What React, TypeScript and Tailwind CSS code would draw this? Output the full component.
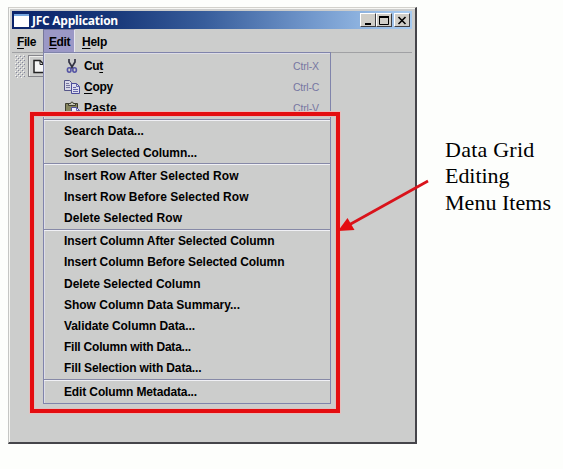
import React from "react";

type Entry = { label: string; width: number; mnemonic?: number; shortcut?: string; icon?: React.ReactNode };

function ScissorsIcon() {
  return (
    <svg width="16" height="16" viewBox="0 0 16 16" fill="none">
      <path d="M5 1v3l4 6.500M11 1v3L7 10.500" stroke="#333344" strokeWidth="1.700" />
      <ellipse cx="5.200" cy="12" rx="1.800" ry="2.200" stroke="#5555a5" strokeWidth="1.600" />
      <ellipse cx="10.600" cy="12" rx="1.800" ry="2.200" stroke="#5555a5" strokeWidth="1.600" />
    </svg>
  );
}

function CopyIcon() {
  return (
    <svg width="17" height="16" viewBox="0 0 17 16" fill="none">
      <path d="M.5 1.500h5l2 2v8h-7z" fill="#d9d9e8" stroke="#555588" />
      <path d="M2 4.500h3M2 6.500h4M2 8.500h4" stroke="#77779f" />
      <path d="M7.500 4.500h5l3 3v7h-8z" fill="#dedeee" stroke="#4c4c9b" />
      <path d="M12.500 4.500v3h3M9 8.500h3M9 10.500h5M9 12.500h5" stroke="#6666ac" />
    </svg>
  );
}

function PasteIcon() {
  return (
    <svg width="17" height="16" viewBox="0 0 17 16" fill="none">
      <path d="M1.500 2.500h12v12h-12z" fill="#85855d" stroke="#3d3d2f" />
      <path d="M4.500 4.500v-2h2l1-1.500h1l1 1.500h2v2z" fill="#c5c5b5" stroke="#3d3d2f" />
      <path d="M7.500 6.500h5l3 3v6h-8z" fill="#eeeeff" stroke="#5050a0" />
      <path d="M12.500 6.500v3h3M9 10.500h3M9 12.500h5" stroke="#6666ac" />
    </svg>
  );
}

const groups: Entry[][] = [
  [
    { label: "Cut", width: 19, mnemonic: 2, shortcut: "Ctrl-X", icon: <ScissorsIcon /> },
    { label: "Copy", width: 29, mnemonic: 0, shortcut: "Ctrl-C", icon: <CopyIcon /> },
    { label: "Paste", width: 33, mnemonic: 0, shortcut: "Ctrl-V", icon: <PasteIcon /> },
  ],
  [
    { label: "Search Data...", width: 80 },
    { label: "Sort Selected Column...", width: 133 },
  ],
  [
    { label: "Insert Row After Selected Row", width: 174.5 },
    { label: "Insert Row Before Selected Row", width: 184.5 },
    { label: "Delete Selected Row", width: 118 },
  ],
  [
    { label: "Insert Column After Selected Column", width: 210.5 },
    { label: "Insert Column Before Selected Column", width: 220.5 },
    { label: "Delete Selected Column", width: 136.5 },
    { label: "Show Column Data Summary...", width: 176 },
    { label: "Validate Column Data...", width: 131 },
    { label: "Fill Column with Data...", width: 127 },
    { label: "Fill Selection with Data...", width: 137.5 },
  ],
  [{ label: "Edit Column Metadata...", width: 133 }],
];

// Spreads the glyphs of a label so that it fills its measured width.
function Fitted({ text, width, mnemonic, className = "" }: { text: string; width: number; mnemonic?: number; className?: string }) {
  const ref = React.useRef<HTMLSpanElement>(null);
  React.useLayoutEffect(() => {
    const el = ref.current;
    if (!el) return;
    el.style.letterSpacing = "0px";
    const natural = el.getBoundingClientRect().width;
    el.style.letterSpacing = `${(width - natural) / text.length}px`;
  }, [text, width]);
  return (
    <span ref={ref} className={`inline-block whitespace-pre ${className}`}>
      {mnemonic === undefined ? text : (
        <>
          {text.slice(0, mnemonic)}
          <span className="underline decoration-1 underline-offset-2">{text[mnemonic]}</span>
          {text.slice(mnemonic + 1)}
        </>
      )}
    </span>
  );
}

function EditMenu() {
  return (
    <div className="absolute left-[43px] top-[52px] h-[352px] w-[288px] border border-[#8084ab] bg-[#cccdcc] pt-[2px] shadow-[inset_1px_1px_0_#dddde7]">
      {groups.map((group, g) => (
        <React.Fragment key={g}>
          {g > 0 && <div className="h-[2px] border-b border-t border-b-[#f0f0f5] border-t-[#8689a7]" />}
          {group.map((item) => (
            <div key={item.label} className="flex h-[21.2px] items-center pl-[20px] pr-[11px] pt-[1.4px]">
              {item.icon && <span className="w-[20px] shrink-0">{item.icon}</span>}
              <Fitted text={item.label} width={item.width} mnemonic={item.mnemonic} />
              {item.shortcut && (
                <span className="ml-auto text-[10.5px] font-normal text-[#7777a2]">
                  <Fitted text={item.shortcut} width={26} />
                </span>
              )}
            </div>
          ))}
        </React.Fragment>
      ))}
    </div>
  );
}

export default function App() {
  return (
    <div className="relative h-[469px] w-[563px] overflow-hidden bg-[#fdfefc] pl-[8px] pt-[7px] font-['Liberation_Sans',Arial,sans-serif] text-[12px] font-bold leading-[15px] text-black">
      <div className="h-[437px] w-[409px] border border-b-2 border-r-2 border-b-[#45454a] border-l-[#c5c6c4] border-r-[#45454a] border-t-[#d2d1cc] bg-[#cccdcc] pl-[3px] pr-[3px] pt-[3px] shadow-[inset_1px_1px_0_#f7f7f4]">
        <div className="flex h-[18px] items-center bg-[linear-gradient(90deg,#0b246a_0%,#173779_25%,#375d9b_48%,#7298cc_75%,#a6caf0_98%)] pl-[2px] pr-[2px]">
          <div className="h-[13px] w-[15px] border-t-2 border-[#76a7df] bg-white" />
          <span className="ml-[3px] font-['Open_Sans',sans-serif] text-[12px] text-white">
            <Fitted text="JFC Application" width={86} />
          </span>
          <div className="ml-auto flex">
            {["minimize", "maximize", "close"].map((name) => (
              <button key={name} aria-label={name} className={`flex h-[14px] w-[16px] items-center justify-center border border-b-[#3f3f43] border-l-white border-r-[#3f3f43] border-t-white bg-[#d0cec8] ${name === "close" ? "ml-[2px]" : ""}`}>
                <svg width="12" height="11" viewBox="0 0 12 11" fill="none" stroke="black">
                  {name === "minimize" && <path d="M3 9h6" strokeWidth="2" />}
                  {name === "maximize" && <path d="M1.500 2h9M1.500 1v8.500h9V1" strokeWidth="1" />}
                  {name === "maximize" && <path d="M1 2h10" strokeWidth="2" />}
                  {name === "close" && <path d="M2.500 2l7 7M9.500 2l-7 7" strokeWidth="1.600" />}
                </svg>
              </button>
            ))}
          </div>
        </div>
        <div className="flex h-[24px] border-b border-[#a0a1a4]">
          <div className="flex w-[31px] items-center pl-[5px] pt-[3px]"><Fitted text="File" width={19} mnemonic={0} /></div>
          <div className="flex w-[32px] items-center border border-b-0 border-l-[#77779a] border-r-[#e6e6ee] border-t-[#77779a] bg-[#9b98c6] pl-[5px] pt-[2px]"><Fitted text="Edit" width={21} mnemonic={0} /></div>
          <div className="flex items-center pl-[7px] pt-[3px]"><Fitted text="Help" width={25} mnemonic={0} /></div>
        </div>
        <div className="flex pl-[3px] pt-[2px]">
          <svg width="10" height="23" viewBox="0 0 10 23">
            <defs>
              <pattern id="grip" width="4" height="4" patternUnits="userSpaceOnUse">
                <path d="M0 0h1v1H0zM2 2h1v1H2z" fill="#f4f4f4" />
                <path d="M1 1h1v1H1zM3 3h1v1H3z" fill="#85879c" />
              </pattern>
            </defs>
            <path d="M0 0h10v23H0z" fill="url(#grip)" />
          </svg>
          <div className="ml-[3px] flex h-[22px] w-[24px] border border-[#85858a] pl-[4px] pt-[3px] shadow-[inset_1px_1px_0_#eeeeec]">
            <svg width="14" height="15" viewBox="0 0 14 15"><path d="M1 1.500h6l4 4v8H1z" fill="#f5f5f5" stroke="#222" strokeWidth="1.500" /><path d="M7 1.500v4h4" fill="none" stroke="#222" /></svg>
          </div>
        </div>
      </div>
      <EditMenu />
      <div className="absolute left-[30px] top-[112px] h-[301px] w-[310px] border-4 border-[#e40d10] shadow-[0_0_0_1px_#e7bebd,inset_0_0_0_1px_#dbbfc0]" />
      <svg className="absolute left-[336px] top-[174px]" width="96" height="64" viewBox="0 0 96 64">
        <path d="M92 7L12 51.500" stroke="#d9131b" strokeWidth="2.700" />
        <path d="M2 57l9.500-13 7 12z" fill="#e40d10" />
      </svg>
      <div className="absolute left-[445px] top-[136.5px] font-['Liberation_Serif',serif] text-[22px] font-normal leading-[26.5px]">
        <div><Fitted text="Data Grid" width={89.5} /></div>
        <div><Fitted text="Editing" width={64.5} /></div>
        <div><Fitted text="Menu Items" width={106} /></div>
      </div>
    </div>
  );
}
